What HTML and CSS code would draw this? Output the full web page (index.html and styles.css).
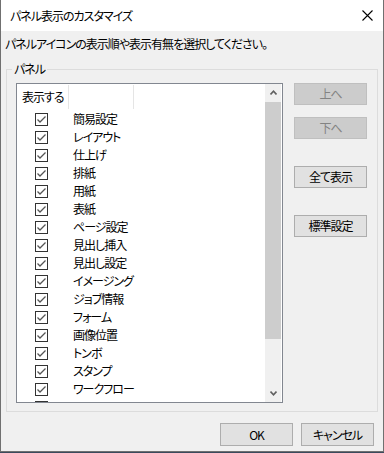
FILE: index.html
```html
<!DOCTYPE html>
<html lang="ja">
<head>
<meta charset="utf-8">
<title>パネル表示のカスタマイズ</title>
<link rel="stylesheet" href="styles.css">
</head>
<body>
<svg class="defs" width="0" height="0" aria-hidden="true">
  <symbol id="cb" viewBox="0 0 13 13">
    <rect x="0.5" y="0.5" width="12" height="12" fill="#fff" stroke="#333"/>
    <polyline points="2.5,6.5 5,9 10.5,3.5" fill="none" stroke="#555" stroke-width="1.3"/>
  </symbol>
</svg>
<div class="window">
  <div class="titlebar">
    <span class="title">パネル表示のカスタマイズ</span>
    <svg class="close" width="11" height="11" viewBox="0 0 11 11"><path d="M0.5 0.5 L10.5 10.5 M10.5 0.5 L0.5 10.5" stroke="#000" stroke-width="1.1"/></svg>
  </div>
  <div class="body">
    <p class="desc">パネルアイコンの表示順や表示有無を選択してください。</p>
    <fieldset class="group">
      <legend>パネル</legend>
      <div class="group-inner">
        <div class="list">
          <div class="list-main">
            <div class="header">
              <div class="hcol c1">表示する</div>
              <div class="hcol c2"></div>
            </div>
            <div class="rows">
              <div class="row"><svg class="cb"><use href="#cb"/></svg><span>簡易設定</span></div>
              <div class="row"><svg class="cb"><use href="#cb"/></svg><span>レイアウト</span></div>
              <div class="row"><svg class="cb"><use href="#cb"/></svg><span>仕上げ</span></div>
              <div class="row"><svg class="cb"><use href="#cb"/></svg><span>排紙</span></div>
              <div class="row"><svg class="cb"><use href="#cb"/></svg><span>用紙</span></div>
              <div class="row"><svg class="cb"><use href="#cb"/></svg><span>表紙</span></div>
              <div class="row"><svg class="cb"><use href="#cb"/></svg><span>ページ設定</span></div>
              <div class="row"><svg class="cb"><use href="#cb"/></svg><span>見出し挿入</span></div>
              <div class="row"><svg class="cb"><use href="#cb"/></svg><span>見出し設定</span></div>
              <div class="row"><svg class="cb"><use href="#cb"/></svg><span>イメージング</span></div>
              <div class="row"><svg class="cb"><use href="#cb"/></svg><span>ジョブ情報</span></div>
              <div class="row"><svg class="cb"><use href="#cb"/></svg><span>フォーム</span></div>
              <div class="row"><svg class="cb"><use href="#cb"/></svg><span>画像位置</span></div>
              <div class="row"><svg class="cb"><use href="#cb"/></svg><span>トンボ</span></div>
              <div class="row"><svg class="cb"><use href="#cb"/></svg><span>スタンプ</span></div>
              <div class="row"><svg class="cb"><use href="#cb"/></svg><span>ワークフロー</span></div>
              <div class="row"><svg class="cb"><use href="#cb"/></svg><span></span></div>
            </div>
          </div>
          <div class="scrollbar">
            <div class="sb-btn"><svg width="7" height="5" viewBox="0 0 7 5"><polyline points="0.5,4.5 3.5,1.2 6.5,4.5" fill="none" stroke="#606060" stroke-width="1.6"/></svg></div>
            <div class="sb-track"><div class="sb-thumb"></div></div>
            <div class="sb-btn"><svg width="7" height="5" viewBox="0 0 7 5"><polyline points="0.5,0.5 3.5,3.8 6.5,0.5" fill="none" stroke="#606060" stroke-width="1.6"/></svg></div>
          </div>
        </div>
        <div class="side">
          <button class="btn disabled">上へ</button>
          <button class="btn disabled near">下へ</button>
          <button class="btn far">全て表示</button>
          <button class="btn far">標準設定</button>
        </div>
      </div>
    </fieldset>
    <div class="footer">
      <button class="btn tall">OK</button>
      <button class="btn tall">キャンセル</button>
    </div>
  </div>
</div>
</body>
</html>
```
FILE: styles.css
```css
* { box-sizing: border-box; }
html, body { margin: 0; padding: 0; }
body {
  width: 384px;
  height: 453px;
  overflow: hidden;
  background: #3b4a5c;
  font-family: "Noto Sans CJK JP", "Noto Sans", sans-serif;
  font-size: 12px;
  font-weight: 400;
  letter-spacing: -1px;
  color: #000;
  font-feature-settings: "palt";
}
.defs { position: absolute; width: 0; height: 0; }
.window {
  width: 384px;
  height: 452px;
  background: #f0f0f0;
  border: 1px solid #707070;
  border-top: none;
  display: flex;
  flex-direction: column;
}
.titlebar {
  height: 31px;
  flex: none;
  background: #fff;
  display: flex;
  align-items: center;
  justify-content: space-between;
  padding: 0 10px 0 9px;
}
.title { line-height: 16px; }
.close { display: block; }
.body { flex: 1; display: flex; flex-direction: column; }
.desc { margin: 5px 0 0 4px; line-height: 16px; }
.group {
  margin: 9px 5px 0 5px;
  padding: 6px 0 8px 9px;
  border: 1px solid #dcdcdc;
  min-width: 0;
}
.group legend {
  margin-left: -4px;
  padding: 0 2px;
  line-height: 16px;
}
.group-inner { display: flex; align-items: flex-start; }
.list {
  width: 267px;
  height: 320px;
  border: 1px solid #828790;
  background: #fff;
  display: flex;
  padding-right: 1px;
}
.list-main { flex: 1; overflow: hidden; }
.header { height: 26px; display: flex; }
.hcol {
  height: 24px;
  margin-top: 1px;
  border-right: 1px solid #e5e5e5;
  display: flex;
  align-items: center;
  padding-left: 5px;
  line-height: 16px;
}
.c1 { width: 52px; }
.c2 { width: 65px; }
.row {
  height: 18px;
  display: flex;
  align-items: center;
  padding-left: 18px;
  line-height: 16px;
  white-space: nowrap;
}
.cb { width: 13px; height: 13px; flex: none; margin-right: 25px; }
.scrollbar {
  width: 16px;
  display: flex;
  flex-direction: column;
  background: #f0f0f0;
}
.sb-btn {
  height: 17px;
  flex: none;
  display: flex;
  align-items: center;
  justify-content: center;
}
.sb-btn svg { display: block; }
.sb-track { flex: 1; padding-top: 1px; }
.sb-thumb { height: 237px; background: #cdcdcd; }
.side { display: flex; flex-direction: column; margin-left: 11px; }
.btn {
  width: 73px;
  height: 22px;
  padding: 0;
  border: 1px solid #adadad;
  background: #e1e1e1;
  font: inherit;
  letter-spacing: inherit;
  color: #000;
  line-height: 16px;
  display: flex;
  align-items: center;
  justify-content: center;
  font-feature-settings: "palt";
}
.btn.disabled { background: #cccccc; border-color: #bfbfbf; color: #838383; }
.near { margin-top: 12px; }
.far { margin-top: 27px; }
.footer {
  display: flex;
  justify-content: flex-end;
  gap: 8px;
  padding-right: 9px;
  margin-top: 11px;
}
.tall { height: 23px; }
```
